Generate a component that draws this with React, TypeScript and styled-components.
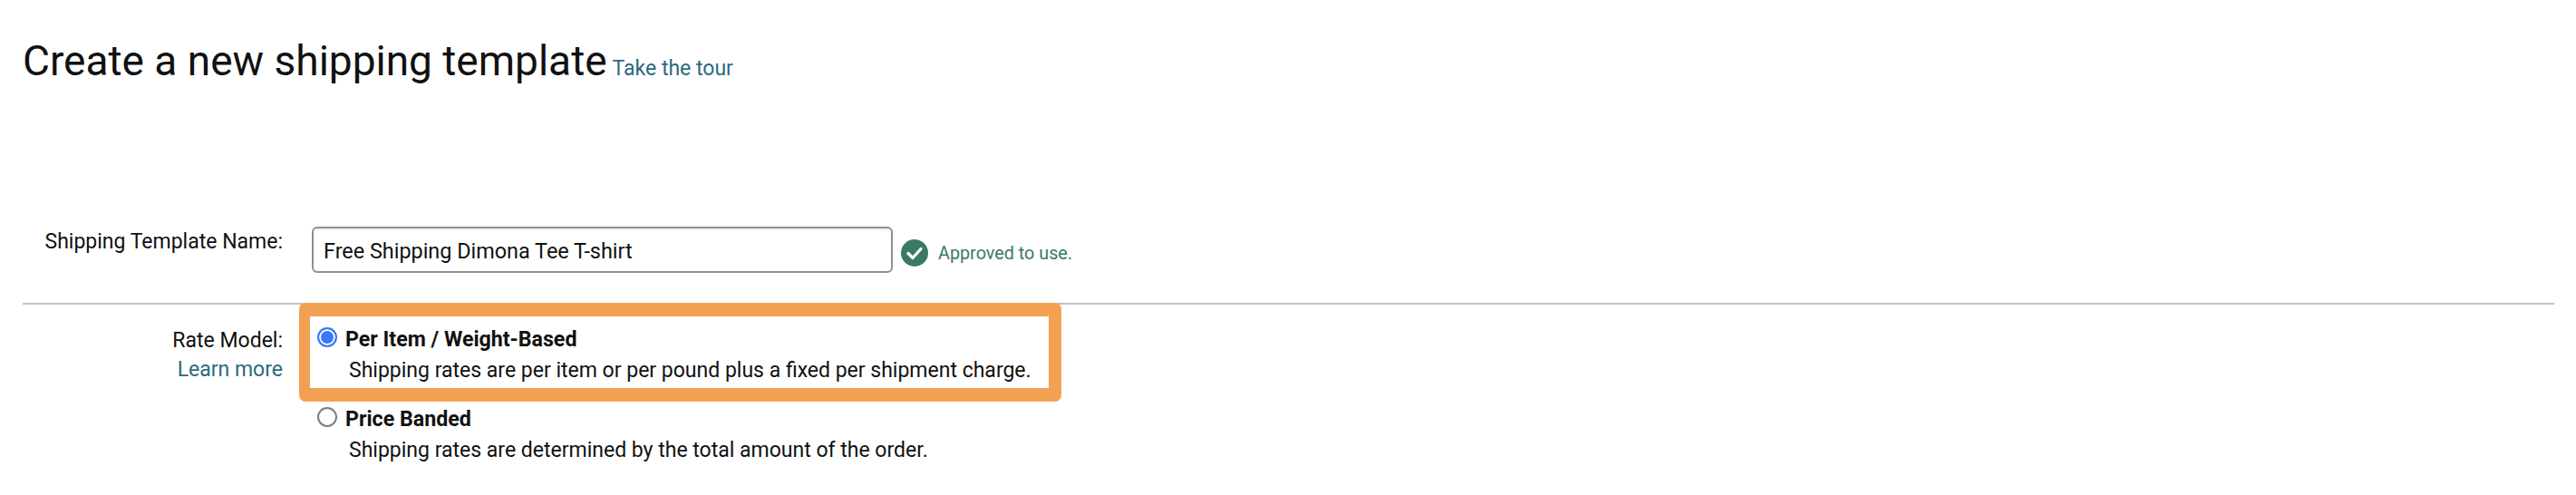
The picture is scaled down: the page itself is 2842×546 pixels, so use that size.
import React from 'react';
import styled, { createGlobalStyle } from 'styled-components';

const GlobalStyle = createGlobalStyle`
  html, body { margin: 0; padding: 0; background: #fff; }
  body { font-family: "Roboto", "Liberation Sans", sans-serif; color: #111; }
`;

const Page = styled.div`
  width: 2842px;
  height: 546px;
  padding: 0 25px;
  box-sizing: border-box;
  overflow: hidden;
`;

const TitleRow = styled.div`
  display: flex;
  align-items: baseline;
  gap: 6px;
  padding-top: 32px;
`;

const Title = styled.h1`
  margin: 0;
  font-size: 46px;
  line-height: 70px;
  font-weight: 400;
  color: #111;
`;

const Link = styled.a`
  color: #2b6a80;
  font-size: 23px;
  text-decoration: none;
`;

const FormRow = styled.div`
  display: grid;
  grid-template-columns: 287px 1fr;
  column-gap: 32px;
`;

const NameRow = styled(FormRow)`
  margin-top: 148px;
  padding-bottom: 33px;
  border-bottom: 2px solid #c4c4c4;
  width: 2793px;
`;

const LabelCol = styled.div<{ $inset?: boolean }>`
  display: flex;
  flex-direction: column;
  align-items: flex-end;
  font-size: 23px;
  line-height: ${(p) => (p.$inset ? '32px' : '34px')};
  padding-top: ${(p) => (p.$inset ? '3px' : '0')};
`;

const NameField = styled.div`
  display: flex;
  align-items: center;
`;

const NameInput = styled.input`
  width: 641px;
  height: 51px;
  box-sizing: border-box;
  padding: 2px 11px 0;
  border: 2px solid #8f9090;
  border-radius: 6px;
  font: inherit;
  font-size: 23.4px;
  color: #111;
  box-shadow: inset 0 2px 2px rgba(0, 0, 0, 0.06);
`;

const Approved = styled.div`
  display: flex;
  align-items: center;
  gap: 11px;
  margin: 7px 0 0 9px;
  font-size: 19.8px;
  color: #3a7a63;
`;

const RateRow = styled(FormRow)`
  padding-top: 21px;
`;

const Options = styled.div`
  position: relative;
  display: flex;
  flex-direction: column;
  gap: 19px;
  padding-left: 6px;
`;

const Highlight = styled.div`
  position: absolute;
  left: -14px;
  top: -23px;
  width: 841px;
  height: 109px;
  box-sizing: border-box;
  border: solid #f2a153;
  border-width: 15px 14px 15px 12px;
  border-radius: 7px;
  pointer-events: none;
`;

const Option = styled.label`
  display: block;
`;

const OptionHead = styled.div`
  display: flex;
  align-items: center;
  gap: 9px;
  font-size: 23.2px;
  font-weight: 700;
  line-height: 34px;
`;

const Radio = styled.span<{ $checked?: boolean }>`
  width: 22px;
  height: 22px;
  box-sizing: border-box;
  border-radius: 50%;
  border: 2px solid ${(p) => (p.$checked ? '#3a78f2' : '#7d7d7d')};
  background: ${(p) => (p.$checked ? '#3a78f2' : '#fff')};
  box-shadow: ${(p) => (p.$checked ? 'inset 0 0 0 2px #fff' : 'none')};
  margin-top: -4px;
`;

const OptionDesc = styled.div`
  padding-left: 35px;
  font-size: 23px;
  line-height: 35px;
`;

const CheckIcon = () => (
  <svg width="30" height="30" viewBox="0 0 30 30">
    <circle cx="15" cy="15" r="15" fill="#3a7a63" />
    <path d="M8 15.5l5 5 9-10" fill="none" stroke="#fff" strokeWidth="3.2" strokeLinecap="round" strokeLinejoin="round" />
  </svg>
);

export default function App() {
  return (
    <Page>
      <GlobalStyle />
      <TitleRow>
        <Title>Create a new shipping template</Title>
        <Link href="#">Take the tour</Link>
      </TitleRow>
      <NameRow>
        <LabelCol>Shipping Template Name:</LabelCol>
        <NameField>
          <NameInput defaultValue="Free Shipping Dimona Tee T-shirt" />
          <Approved>
            <CheckIcon />
            Approved to use.
          </Approved>
        </NameField>
      </NameRow>
      <RateRow>
        <LabelCol $inset>
          Rate Model:
          <Link href="#">Learn more</Link>
        </LabelCol>
        <Options>
          <Highlight />
          <Option>
            <OptionHead>
              <Radio $checked />
              Per Item / Weight-Based
            </OptionHead>
            <OptionDesc>Shipping rates are per item or per pound plus a fixed per shipment charge.</OptionDesc>
          </Option>
          <Option>
            <OptionHead>
              <Radio />
              Price Banded
            </OptionHead>
            <OptionDesc>Shipping rates are determined by the total amount of the order.</OptionDesc>
          </Option>
        </Options>
      </RateRow>
    </Page>
  );
}
